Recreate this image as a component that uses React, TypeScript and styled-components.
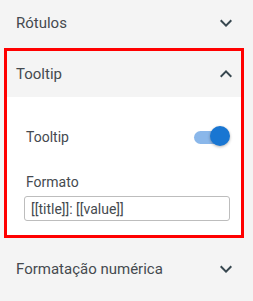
import React from 'react'
import styled, { createGlobalStyle } from 'styled-components'

const GlobalStyle = createGlobalStyle`
    body {
        margin: 0;
        background: #f4f4f4;
        font-family: Roboto, "Liberation Sans", sans-serif;
    }
`

function Chevron({ up }: { up?: boolean }): JSX.Element {
    return (
        <ChevronIcon viewBox="0 0 24 24" $up={up}>
            <path d="M7.4 8.6 12 13.2l4.6-4.6L18 10l-6 6-6-6z" />
        </ChevronIcon>
    )
}

export default function App(): JSX.Element {
    return (
        <Panel>
            <GlobalStyle />
            <Header>
                <Title>Rótulos</Title>
                <Chevron />
            </Header>
            <Highlight>
                <InnerHeader>
                    <Title>Tooltip</Title>
                    <Chevron up />
                </InnerHeader>
                <Content>
                    <ToggleRow>
                        <Label>Tooltip</Label>
                        <Switch>
                            <Track />
                            <Knob />
                        </Switch>
                    </ToggleRow>
                    <Field>
                        <Label>Formato</Label>
                        <Input defaultValue="[[title]]: [[value]]" />
                    </Field>
                </Content>
            </Highlight>
            <Header $gap>
                <Title>Formatação numérica</Title>
                <Chevron />
            </Header>
        </Panel>
    )
}

const Panel = styled.div`
    width: 253px;
    display: flex;
    flex-direction: column;
`
const Header = styled.div<{ $gap?: boolean }>`
    height: 46px;
    margin-top: ${(p) => (p.$gap ? '8px' : '0')};
    margin-bottom: ${(p) => (p.$gap ? '0' : '2px')};
    padding: 0 15px 0 16px;
    display: flex;
    align-items: center;
    justify-content: space-between;
`
const Title = styled.span`
    font-size: 15px;
    color: #454a4f;
`
const ChevronIcon = styled.svg<{ $up?: boolean }>`
    width: 24px;
    height: 24px;
    fill: #37474f;
    transform: ${(p) => (p.$up ? 'rotate(180deg)' : 'none')};
`
const Highlight = styled.div`
    margin: 0 9px 0 4px;
    border: 3px solid #ff0000;
    display: flex;
    flex-direction: column;
`
const InnerHeader = styled(Header)`
    padding: 0 3px 0 9px;
    margin: 0;
`
const Content = styled.div`
    background: #fff;
    padding: 29px 11px 14px 19px;
    display: flex;
    flex-direction: column;
    gap: 26px;
`
const ToggleRow = styled.div`
    height: 22px;
    display: flex;
    align-items: center;
    justify-content: space-between;
`
const Label = styled.span`
    font-size: 14px;
    color: #454a4f;
`
const Switch = styled.div`
    position: relative;
    width: 38px;
    height: 22px;
`
const Track = styled.div`
    position: absolute;
    left: 2px;
    top: 5px;
    width: 34px;
    height: 13px;
    border-radius: 7px;
    background: #8ab7ea;
`
const Knob = styled.div`
    position: absolute;
    right: 0;
    top: 0;
    width: 20px;
    height: 20px;
    border-radius: 50%;
    background: #1976d2;
    box-shadow: 0 1px 3px rgba(0, 0, 0, 0.3);
`
const Field = styled.div`
    display: flex;
    flex-direction: column;
    gap: 6px;
`
const Input = styled.input`
    box-sizing: border-box;
    width: 206px;
    height: 25px;
    margin-left: -2px;
    padding: 0 6px;
    border: 1px solid #bdbdbd;
    border-radius: 3px;
    font-family: Roboto, "Liberation Sans", sans-serif;
    font-size: 14px;
    color: #454a4f;
    outline: none;
`
